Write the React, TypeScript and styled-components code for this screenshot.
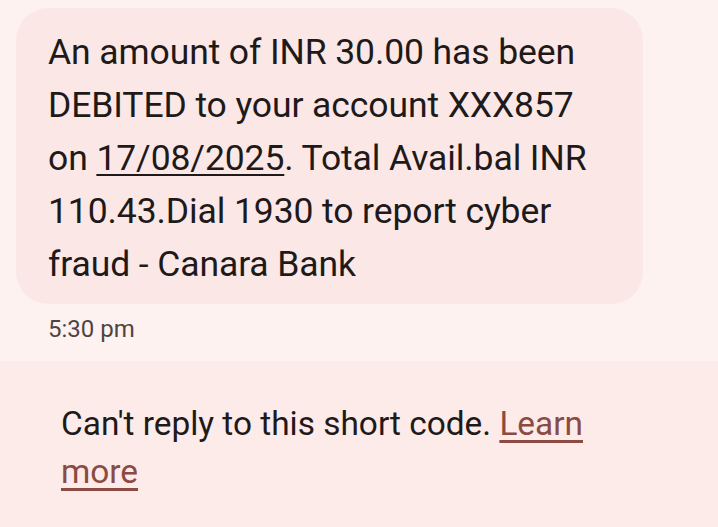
import React from "react";
import styled, { createGlobalStyle } from "styled-components";

const Global = createGlobalStyle`
  html, body { margin: 0; padding: 0; }
  body {
    background: #fdf2f0;
    font-family: Roboto, "Noto Sans", sans-serif;
    width: 718px;
    height: 527px;
    overflow: hidden;
  }
`;

const Page = styled.div`
  display: flex;
  flex-direction: column;
  width: 718px;
  height: 527px;
`;

const Thread = styled.div`
  display: flex;
  flex-direction: column;
  align-items: flex-start;
  padding: 8px 0 0 16px;
  height: 361px;
  box-sizing: border-box;
`;

const Bubble = styled.div`
  width: 627px;
  box-sizing: border-box;
  background: #fbe8e6;
  border-radius: 32px;
  padding: 18px 40px 13px 32px;
  font-size: 35.5px;
  line-height: 53px;
  color: #1f1a1a;
  letter-spacing: -0.1px;
`;

const DateLink = styled.span`
  text-decoration: underline;
  text-decoration-thickness: 2px;
  text-underline-offset: 4px;
`;

const Time = styled.div`
  margin: 10px 0 0 32px;
  font-size: 24px;
  line-height: 30px;
  color: #4f4442;
`;

const Footer = styled.div`
  flex: 1;
  background: #fcebe8;
  padding: 39px 100px 0 61px;
  font-size: 33.4px;
  line-height: 48px;
  color: #1f1a1a;
`;

const Learn = styled.a`
  color: #8b4a42;
  text-decoration: underline;
  text-decoration-thickness: 3px;
  text-underline-offset: 5px;
`;

export default function App() {
  return (
    <Page>
      <Global />
      <Thread>
        <Bubble>
          An amount of INR 30.00 has been DEBITED to your account XXX857 on{" "}
          <DateLink>17/08/2025</DateLink>. Total Avail.bal INR 110.43.Dial 1930 to report cyber fraud - Canara Bank
        </Bubble>
        <Time>5:30 pm</Time>
      </Thread>
      <Footer>
        Can't reply to this short code. <Learn>Learn more</Learn>
      </Footer>
    </Page>
  );
}
